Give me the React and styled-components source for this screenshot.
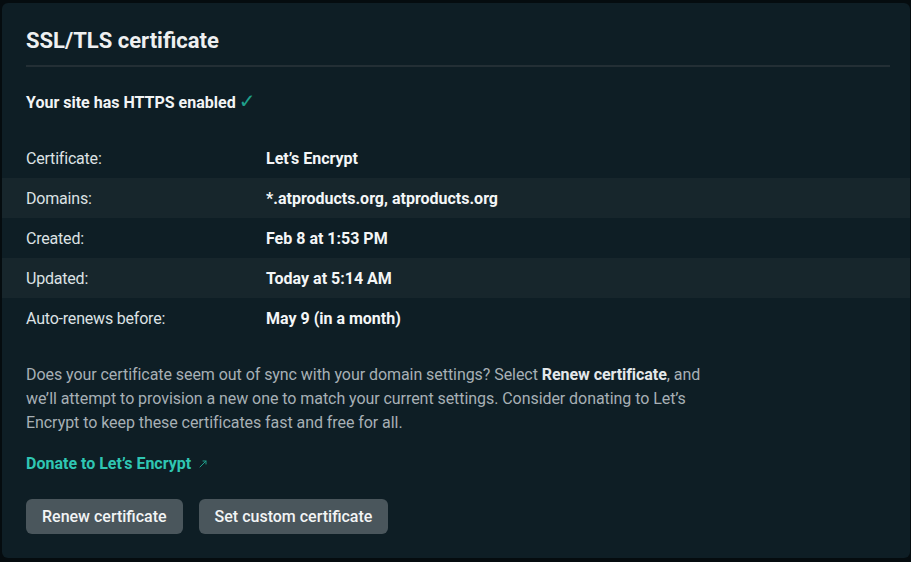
import React from "react";
import styled, { createGlobalStyle } from "styled-components";

const Global = createGlobalStyle`
  html, body { margin: 0; padding: 0; background: #050c0f; }
  body { font-family: Roboto, "Liberation Sans", sans-serif; -webkit-font-smoothing: antialiased; }
  * { box-sizing: border-box; }
`;

const Card = styled.section`
  margin: 3px 1px 4px 2px;
  height: 555px;
  background: #0e1e25;
  border-radius: 6px;
  color: #f0f2f3;
  display: flex;
  flex-direction: column;
`;

const Header = styled.header`
  padding: 24px 20px 0 24px;
`;

const Title = styled.h2`
  margin: 0 0 10px;
  font-size: 22px;
  line-height: 28px;
  font-weight: 700;
  color: #eef0f1;
`;

const Divider = styled.div`
  height: 2px;
  background: #232f35;
`;

const Status = styled.p`
  margin: 24px 24px 23px;
  font-size: 16px;
  line-height: 24px;
  font-weight: 700;
  color: #f2f4f5;
`;

const Check = styled.span`
  color: #1fa08b;
  font-family: "DejaVu Sans", sans-serif;
  font-weight: 400;
  font-size: 20px;
  line-height: 0;
  margin-left: 3px;
`;

const Rows = styled.dl`
  margin: 0;
  display: flex;
  flex-direction: column;
`;

const Row = styled.div`
  display: grid;
  grid-template-columns: 240px 1fr;
  align-items: center;
  height: 40px;
  padding: 0 24px;
  background: ${(p) => (p.$striped ? "#17262c" : "transparent")};
`;

const Label = styled.dt`
  font-size: 16px;
  color: #dde2e4;
  font-weight: 400;
  letter-spacing: -0.2px;
`;

const Value = styled.dd`
  margin: 0;
  font-size: 16px;
  font-weight: 700;
  color: #f4f6f7;
`;

const Body = styled.div`
  padding: 25px 24px 24px;
  display: flex;
  flex-direction: column;
`;

const Text = styled.p`
  margin: 0;
  max-width: 690px;
  font-size: 16px;
  line-height: 24px;
  color: #a7b0b5;
  letter-spacing: -0.06px;

  strong {
    color: #e4e8ea;
    font-weight: 700;
  }
`;

const Link = styled.a`
  margin-top: 17px;
  font-size: 16px;
  line-height: 24px;
  font-weight: 700;
  color: #2fc6b3;
  text-decoration: none;
  display: inline-flex;
  align-items: center;
  gap: 8px;
  align-self: flex-start;
`;

const Actions = styled.div`
  display: flex;
  gap: 16px;
  margin-top: 23px;
`;

const Button = styled.button`
  height: 35px;
  padding: 0 16px;
  border: none;
  border-radius: 6px;
  background: #4a565c;
  color: #f2f4f5;
  font-family: inherit;
  font-size: 16px;
  font-weight: 500;
  cursor: pointer;
`;

const rows = [
  ["Certificate:", "Let’s Encrypt"],
  ["Domains:", "*.atproducts.org, atproducts.org"],
  ["Created:", "Feb 8 at 1:53 PM"],
  ["Updated:", "Today at 5:14 AM"],
  ["Auto-renews before:", "May 9 (in a month)"],
];

const Arrow = () => (
  <svg width="8" height="8" viewBox="0 0 8 8" fill="none" stroke="#1f9e8b" strokeWidth="1" strokeLinecap="round">
    <path d="M1 7L7 1" />
    <path d="M4 1H7V4" />
  </svg>
);

export default function App() {
  return (
    <>
      <Global />
      <Card>
        <Header>
          <Title>SSL/TLS certificate</Title>
          <Divider />
        </Header>
        <Status>
          Your site has HTTPS enabled<Check>✓</Check>
        </Status>
        <Rows>
          {rows.map(([l, v], i) => (
            <Row key={l} $striped={i % 2 === 1}>
              <Label>{l}</Label>
              <Value>{v}</Value>
            </Row>
          ))}
        </Rows>
        <Body>
          <Text>
            Does your certificate seem out of sync with your domain settings? Select{" "}
            <strong>Renew certificate</strong>, and we’ll attempt to provision a new one to match your
            current settings. Consider donating to Let’s Encrypt to keep these certificates fast and
            free for all.
          </Text>
          <Link href="#">
            Donate to Let’s Encrypt <Arrow />
          </Link>
          <Actions>
            <Button>Renew certificate</Button>
            <Button>Set custom certificate</Button>
          </Actions>
        </Body>
      </Card>
    </>
  );
}
